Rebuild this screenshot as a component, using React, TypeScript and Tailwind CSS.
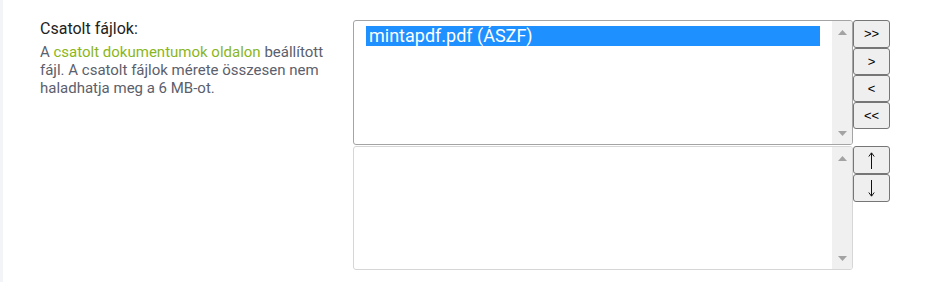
import React from "react";

function ScrollArrow({ dir }: { dir: "up" | "down" }) {
  return (
    <svg width="9" height="5" viewBox="0 0 9 5" className="block">
      {dir === "up" ? (
        <polygon points="0,5 4.5,0 9,5" fill="#a3a3a3" />
      ) : (
        <polygon points="0,0 4.5,5 9,0" fill="#a3a3a3" />
      )}
    </svg>
  );
}

function ListBox({
  heightClass,
  borderClass,
  children,
}: {
  heightClass: string;
  borderClass: string;
  children?: React.ReactNode;
}) {
  return (
    <div className={`flex w-[500px] shrink-0 ${heightClass} rounded-[3px] border bg-white ${borderClass} overflow-hidden`}>
      <div className="flex-1 pl-[12px] pr-[12px] pt-[5px]">{children}</div>
      <div className="flex w-[20px] flex-col items-center justify-between bg-[#f0f0f0] pt-[9px] pb-[8px]">
        <ScrollArrow dir="up" />
        <ScrollArrow dir="down" />
      </div>
    </div>
  );
}

function Btn({ children, h }: { children: React.ReactNode; h: string }) {
  return (
    <button
      className={`flex w-[37px] ${h} items-center justify-center rounded-[3px] border border-[#767676] bg-[#efefef] text-[13px] text-black`}
      style={{ fontFamily: "'Liberation Sans', Arial, sans-serif" }}
    >
      {children}
    </button>
  );
}

function ThinArrow({ dir }: { dir: "up" | "down" }) {
  return (
    <svg width="7" height="17" viewBox="0 0 7 17" className="block">
      <g transform={dir === "down" ? "rotate(180 3.5 8.5)" : undefined} stroke="#111" strokeWidth="1" fill="none">
        <line x1="3.5" y1="1" x2="3.5" y2="17" />
        <polyline points="0.8,4.5 3.5,0.8 6.2,4.5" />
      </g>
    </svg>
  );
}

export default function App() {
  return (
    <div
      className="flex h-[282px] w-[932px] border-l-[3px] border-[#f2f4f7] bg-white"
      style={{ fontFamily: "Roboto, 'Liberation Sans', sans-serif" }}
    >
      <div className="w-[350px] shrink-0 pl-[37px] pt-[19px]">
        <div className="text-[16px] leading-[20px] text-[#222]">Csatolt fájlok:</div>
        <div className="mt-[4px] w-[296px] text-[15px] leading-[18px] text-[#5b606c]">
          A <span className="text-[#8ab61c]">csatolt dokumentumok oldalon</span> beállított fájl. A csatolt fájlok mérete összesen nem haladhatja meg a 6 MB-ot.
        </div>
      </div>
      <div className="pt-[20px]">
        <div className="flex">
          <ListBox heightClass="h-[125px]" borderClass="border-[#a4a4a4]">
            <div className="h-[20px] bg-[#1e90ff] pl-[3px] text-[18px] leading-[20px] text-white">
              mintapdf.pdf (ÁSZF)
            </div>
          </ListBox>
          <div className="flex flex-col">
            <Btn h="h-[28px]">&gt;&gt;</Btn>
            <Btn h="h-[27px]">&gt;</Btn>
            <Btn h="h-[27px]">&lt;</Btn>
            <Btn h="h-[27px]">&lt;&lt;</Btn>
          </div>
        </div>
        <div className="mt-[1px] flex">
          <ListBox heightClass="h-[124px]" borderClass="border-[#d6d6d6]" />
          <div className="flex flex-col">
            <Btn h="h-[28px]">
              <ThinArrow dir="up" />
            </Btn>
            <Btn h="h-[28px]">
              <ThinArrow dir="down" />
            </Btn>
          </div>
        </div>
      </div>
    </div>
  );
}
